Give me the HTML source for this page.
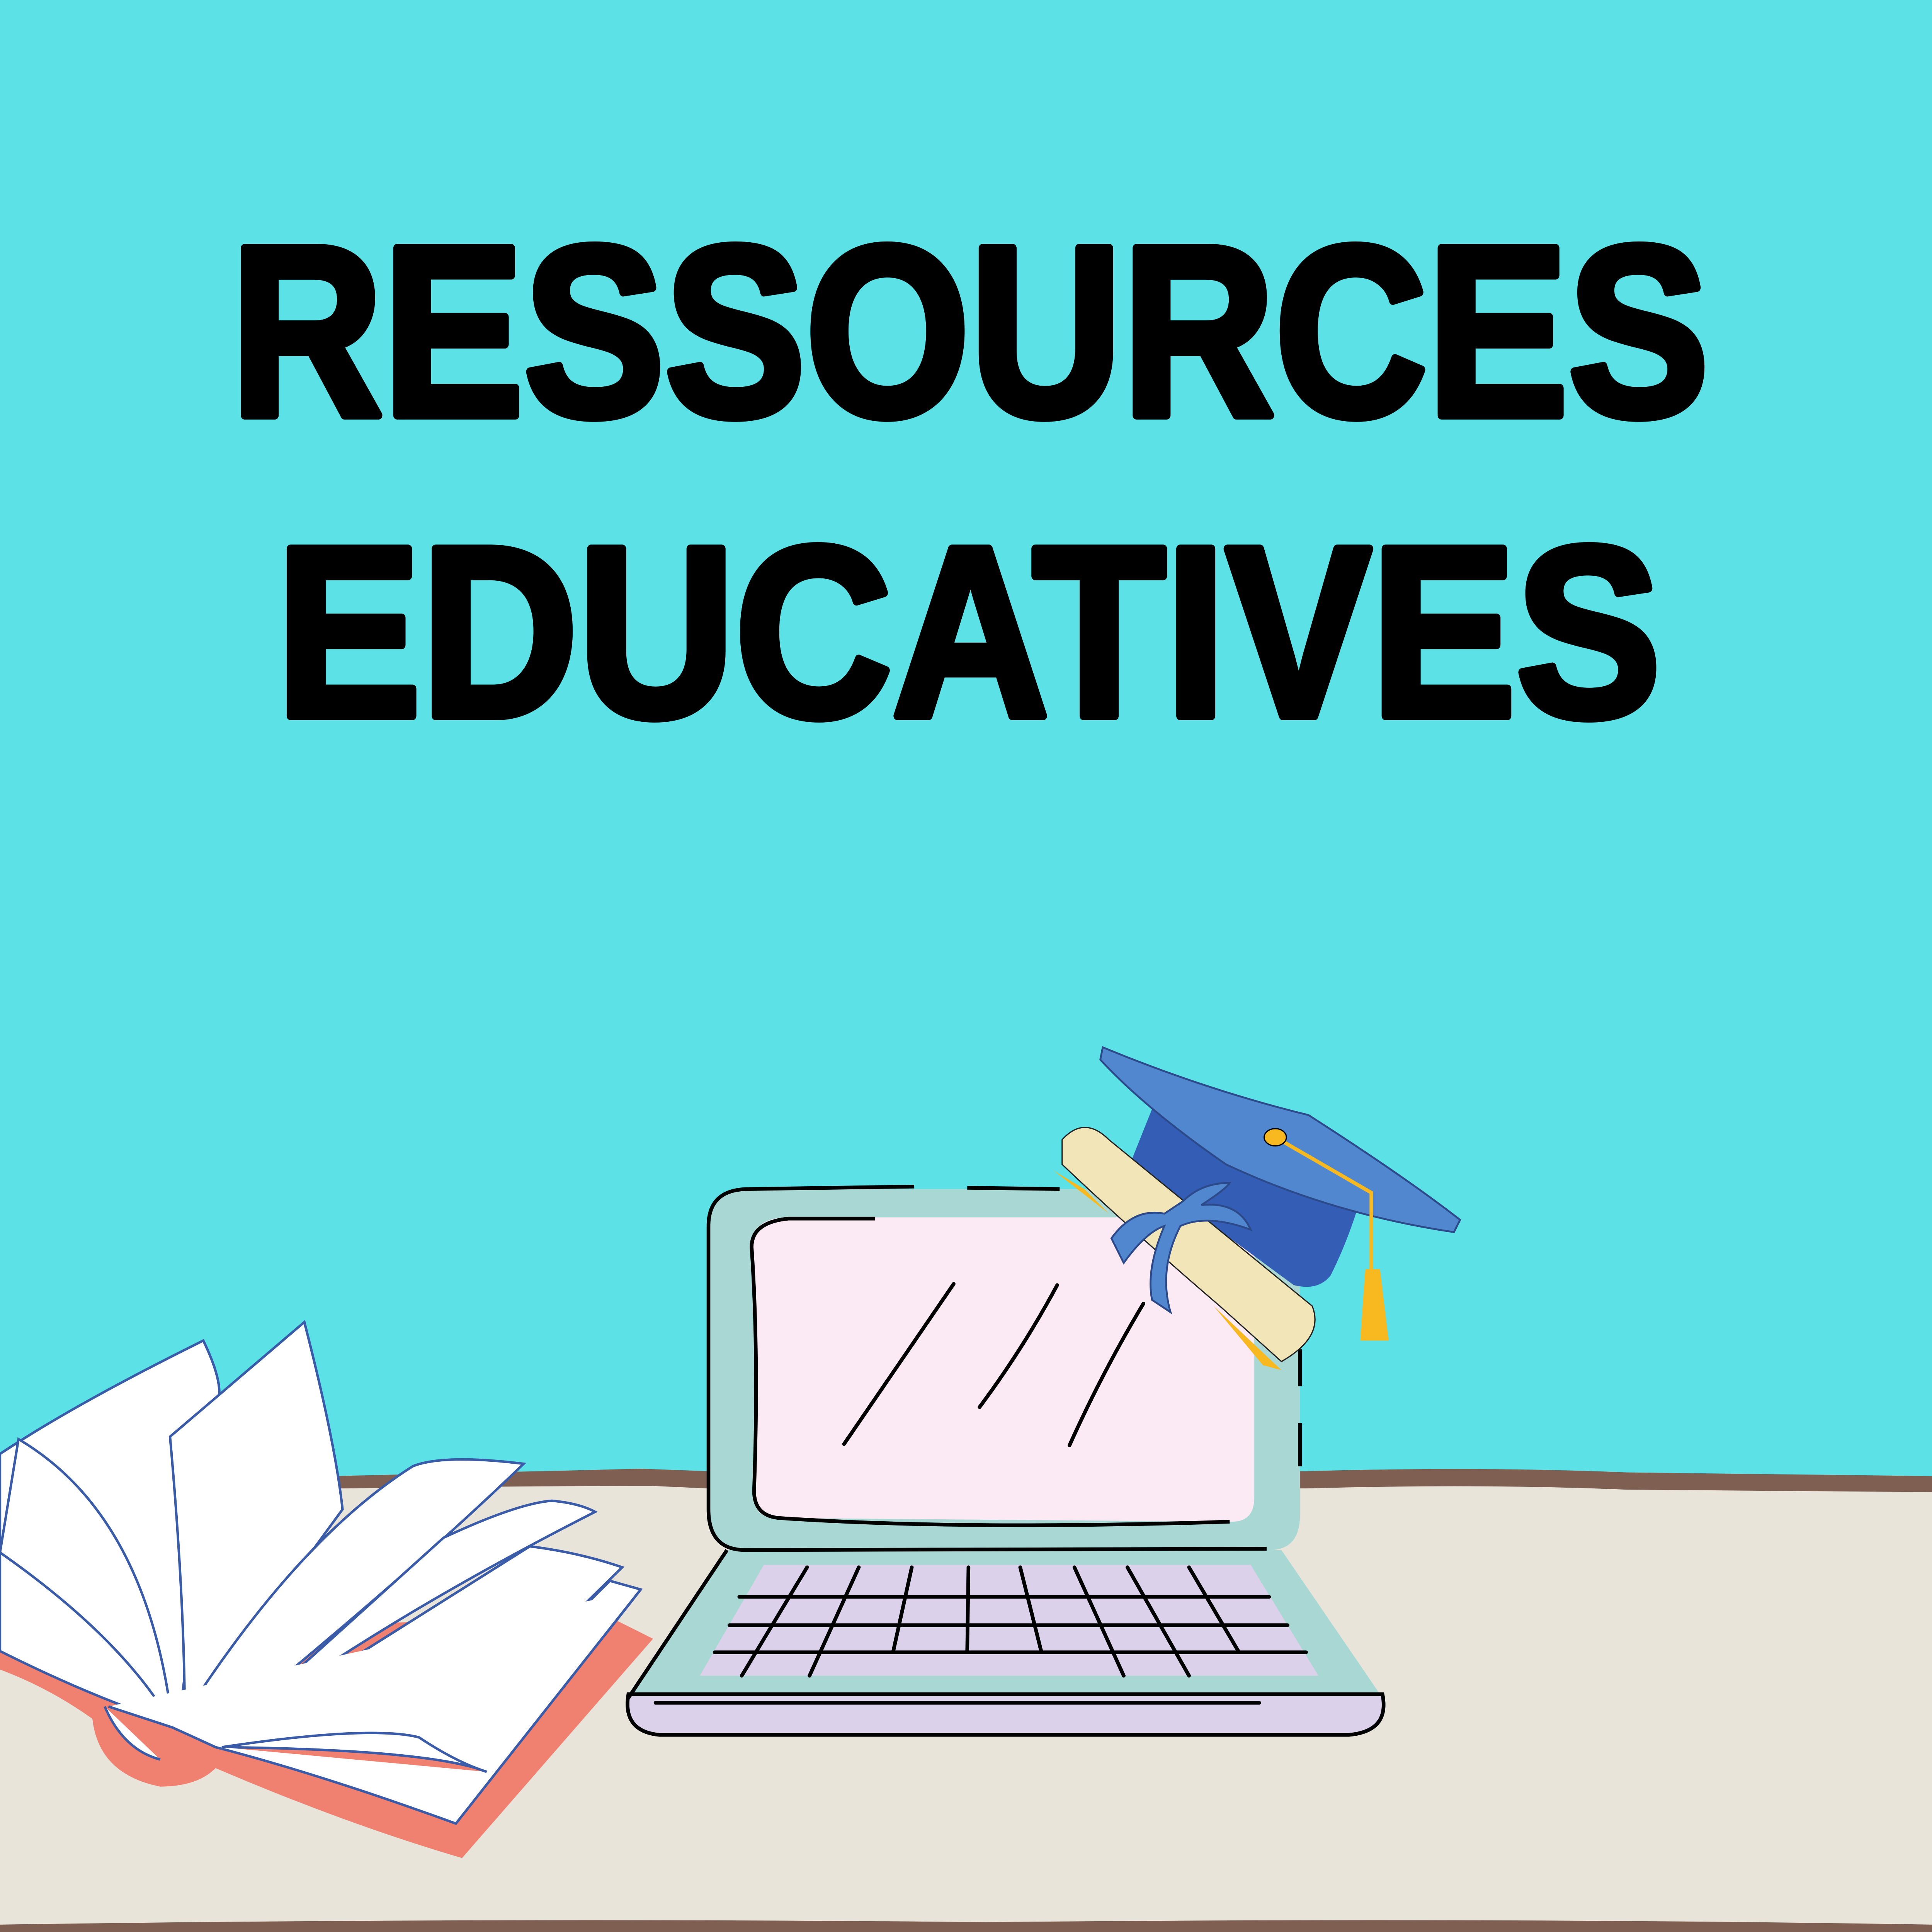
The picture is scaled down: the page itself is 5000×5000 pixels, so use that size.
<!DOCTYPE html>
<html><head><meta charset="utf-8"><style>html,body{margin:0;padding:0;width:5000px;height:5000px;overflow:hidden;background:#5CE1E6}svg{display:block}</style></head>
<body>
<svg width="5000" height="5000" viewBox="0 0 1568 1568" xmlns="http://www.w3.org/2000/svg">
<rect width="1568" height="1568" fill="#5CE1E6"/>
<path d="M0 1200 L270 1198 Q400 1195 520 1192 L575 1194 L1060 1194 Q1200 1190 1320 1195 L1568 1198 L1568 1568 L0 1568 Z" fill="#7F5F52"/>
<path d="M0 1210 L280 1208 Q420 1206 530 1206 L575 1208 L1060 1208 Q1200 1204 1320 1209 L1568 1211 L1568 1568 L0 1568 Z" fill="#E8E4DA"/>
<path d="M0 1562 Q400 1556 800 1560 Q1200 1556 1568 1562 L1568 1568 L0 1568 Z" fill="#7F5F52"/>
<g font-family="Liberation Sans, sans-serif" font-weight="bold" fill="#000" stroke="#000" stroke-width="7" stroke-linejoin="round">
<text x="187" y="337" font-size="197" textLength="1200" lengthAdjust="spacingAndGlyphs">RESSOURCES</text>
<text x="224" y="581" font-size="197" textLength="1124" lengthAdjust="spacingAndGlyphs">EDUCATIVES</text>
</g>
<path d="M590 1258 L1040 1258 L1120 1375 L510 1375 Z" fill="#A9D8D4"/>
<path d="M510 1375 L1122 1375 Q1128 1405 1095 1408 L535 1408 Q505 1405 510 1375 Z" fill="#DCD1EA" stroke="#000" stroke-width="3"/>
<path d="M510 1378 L590 1258" stroke="#000" stroke-width="3" fill="none"/>
<path d="M620 1270 L1015 1270 L1070 1360 L568 1360 Z" fill="#DCD1EA"/>
<path d="M608 965 L1030 965 Q1055 965 1055 990 L1055 1230 Q1055 1258 1030 1258 L605 1258 Q575 1258 575 1225 L575 995 Q575 965 608 965 Z" fill="#A9D8D4"/>
<path d="M608 965 L742 963 M785 964 L860 965 M575 1225 L575 995 Q575 965 608 965 M575 1225 Q575 1258 605 1258 L1028 1257 M1055 1095 L1055 1125 M1055 1155 L1055 1190" stroke="#000" stroke-width="3" fill="none"/>
<path d="M640 988 L1000 988 Q1018 988 1018 1005 L1018 1215 Q1018 1235 1000 1235 L630 1232 Q610 1232 612 1210 Q616 1100 610 1012 Q610 988 640 988 Z" fill="#FBE9F3"/>
<path d="M710 989 L640 989 Q610 992 610 1012 Q616 1100 612 1210 Q612 1230 632 1232 Q780 1242 998 1235" stroke="#000" stroke-width="3" fill="none"/>
<g stroke="#000" stroke-width="3" fill="none" stroke-linecap="round">
<path d="M685 1172 L774 1042 M795 1142 Q830 1095 858 1043 M868 1173 Q895 1113 928 1058"/>
<path d="M600 1296 L1030 1296 M592 1319 L1045 1319 M580 1341 L1060 1341 M532 1382 L1022 1382"/>
<path d="M655 1272 L602 1360 M697 1272 L657 1360 M740 1272 L725 1340 M786 1272 L785 1340 M828 1272 L845 1340 M872 1272 L912 1360 M915 1272 L965 1360 M965 1272 L1005 1340"/>
</g>
<path d="M935 900 L917 945 L1050 1043 Q1070 1048 1080 1035 Q1095 1005 1105 970 Z" fill="#345EB5"/>
<path d="M895 850 Q980 885 1062 905 Q1140 955 1185 990 L1180 1000 Q1080 985 995 945 Q930 900 893 860 Z" fill="#5087CF" stroke="#2C4A8A" stroke-width="1.5"/>
<path d="M1030 920 L1113 968 L1113 1030" stroke="#F8B820" stroke-width="3" fill="none"/>
<path d="M1108 1030 L1120 1030 L1127 1088 L1104 1088 Z" fill="#F8B820"/>
<ellipse cx="1035" cy="923" rx="9" ry="7" fill="#F8B820" stroke="#000" stroke-width="1"/>
<path d="M862 925 Q880 905 900 925 L1065 1060 Q1075 1085 1040 1105 L990 1060 Q920 1000 862 945 Z" fill="#F2E6B8" stroke="#222" stroke-width="1"/>
<path d="M855 950 L880 965 L900 985 Z M985 1060 L1040 1112 L1025 1108 Z" fill="#F8B820"/>
<path d="M945 985 Q920 980 902 1005 L912 1025 Q930 1000 945 995 Q930 1030 935 1055 L950 1065 Q940 1030 958 995 Q980 985 1015 998 Q1005 975 975 978 Q995 965 998 960 Q975 960 960 975 Z" fill="#5087CF" stroke="#2C4A8A" stroke-width="1.5"/>
<path d="M0 1355 Q40 1370 75 1395 Q80 1440 130 1450 Q160 1450 175 1435 Q280 1480 375 1508 L530 1330 L490 1310 L0 1330 Z" fill="#F08070"/>
<g fill="#fff" stroke="#3A5BA8" stroke-width="2">
<path d="M0 1180 Q60 1140 165 1088 Q178 1115 178 1130 L145 1400 Q80 1380 0 1340 Z"/>
<path d="M15 1168 Q120 1230 140 1400 Q100 1330 0 1260 Z"/>
<path d="M138 1166 L247 1073 Q272 1170 278 1225 L150 1400 Q150 1300 138 1166 Z"/>
<path d="M145 1400 Q240 1250 335 1190 Q360 1180 425 1188 Q330 1280 170 1410 Z"/>
<path d="M360 1248 Q420 1220 448 1218 Q470 1220 483 1227 Q300 1320 175 1415 Z"/>
<path d="M430 1255 Q470 1260 505 1272 L405 1370 Q350 1352 200 1400 Z"/>
<path d="M175 1415 Q300 1380 355 1370 Q390 1370 405 1372 L495 1283 L520 1290 Q450 1380 395 1438 Q350 1420 180 1418 Z"/>
<path d="M85 1385 Q100 1420 130 1428 M88 1385 L140 1402 L175 1418 Q260 1440 370 1480 L520 1290 M180 1418 Q300 1400 340 1410 Q370 1430 395 1438"/>
</g>
</svg>
</body></html>
